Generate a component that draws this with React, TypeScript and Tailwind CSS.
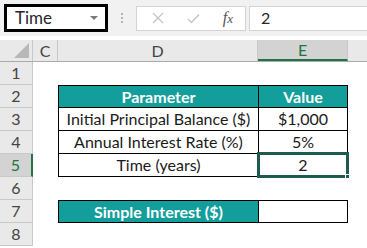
import React from 'react';

const font = { fontFamily: 'Lato, "Liberation Sans", sans-serif' };

const rows = [
  { n: 1 },
  { n: 2, d: 'Parameter', e: 'Value', head: true },
  { n: 3, d: 'Initial Principal Balance ($)', e: '$1,000' },
  { n: 4, d: 'Annual Interest Rate (%)', e: '5%' },
  { n: 5, d: 'Time (years)', e: '2', selected: true },
  { n: 6 },
  { n: 7, d: 'Simple Interest ($)', e: '', head: true },
  { n: 8 },
];

function FormulaBar() {
  return (
    <div className="flex h-[36px] items-center bg-[#f1f1f1] pl-[4px]">
      <div className="flex h-[28px] w-[104px] items-center justify-between border-[3px] border-black bg-white pl-[8px] pr-[7px]">
        <span className="text-[17px] text-[#262626]">Time</span>
        <span className="h-0 w-0 border-x-[4px] border-t-[4px] border-x-transparent border-t-[#7a7a7a]" />
      </div>
      <div className="mx-[13px] flex flex-col gap-[2px]">
        <span className="h-[2px] w-[2px] bg-[#b5b5b5]" />
        <span className="h-[2px] w-[2px] bg-[#b5b5b5]" />
        <span className="h-[2px] w-[2px] bg-[#b5b5b5]" />
      </div>
      <div className="flex h-[25px] w-[110px] items-center justify-between border border-[#d4d4d4] bg-white pl-[15px] pr-[12px]">
        <svg width="12" height="12" viewBox="0 0 12 12" stroke="#c4c4c4" strokeWidth="1.3">
          <path d="M1 1L11 11M11 1L1 11" />
        </svg>
        <svg width="13" height="11" viewBox="0 0 13 11" fill="none" stroke="#c4c4c4" strokeWidth="1.4">
          <path d="M1 6L4.5 9.5L12 1.5" />
        </svg>
        <span className="text-[16px] italic text-[#555]" style={{ fontFamily: '"Liberation Serif", serif' }}>
          f<span className="text-[13px]">x</span>
        </span>
      </div>
      <div className="ml-[3px] flex h-[25px] flex-1 items-center border border-r-0 border-[#d4d4d4] bg-white pl-[11px] text-[16px] text-[#262626]">
        2
      </div>
    </div>
  );
}

function ColumnHeaders() {
  return (
    <div className="mt-[4px] flex h-[22px] border-b border-[#ababab] bg-[#e9e9e9] text-[16px] text-[#444]">
      <div className="flex w-[33px] items-end justify-end border-r border-[#c8c8c8] pb-[3px] pr-[3px]">
        <span className="h-0 w-0" style={{ borderBottom: '15px solid #b8b8b8', borderLeft: '15px solid transparent' }} />
      </div>
      <div className="flex w-[25px] items-center justify-center border-r border-[#c8c8c8]">C</div>
      <div className="flex w-[200px] items-center justify-center border-r border-[#c8c8c8]">D</div>
      <div className="flex w-[90px] items-center justify-center border-b-2 border-r border-b-[#217346] border-r-[#c8c8c8] bg-[#d3d3d3] text-[#217346]">
        E
      </div>
      <div className="flex-1" />
    </div>
  );
}

export default function App() {
  return (
    <div className="h-[248px] w-[367px] overflow-hidden bg-white" style={font}>
      <FormulaBar />
      <ColumnHeaders />
      {rows.map((r) => (
        <div key={r.n} className="flex h-[23px]">
          <div
            className={`flex w-[33px] items-center justify-center border-b border-r text-[16px] ${
              r.selected
                ? 'border-b-[#c8c8c8] border-r-2 border-r-[#217346] bg-[#d3d3d3] text-[#217346]'
                : 'border-[#c8c8c8] bg-[#e9e9e9] text-[#444]'
            }`}
          >
            {r.n}
          </div>
          <div className="w-[25px]" />
          {r.d !== undefined ? (
            <>
              <div
                className={`flex w-[200px] items-center justify-center border-b border-l border-black text-[16px] ${
                  r.head ? 'bg-[#139e9b] font-bold text-white' : 'text-[#1a1a1a]'
                } ${r.n === 2 || r.n === 7 ? 'border-t' : ''}`}
              >
                {r.d}
              </div>
              <div
                className={`relative flex w-[90px] items-center justify-center border-b border-l border-r border-black text-[16px] ${
                  r.head && r.e ? 'bg-[#139e9b] font-bold text-white' : 'text-[#1a1a1a]'
                } ${r.n === 2 || r.n === 7 ? 'border-t' : ''}`}
              >
                {r.e}
                {r.selected && (
                  <div className="absolute -inset-x-[2px] -top-[2px] -bottom-[2px] border-[3px] border-[#1d5a4f]">
                    <span className="absolute -bottom-[4px] -right-[4px] h-[5px] w-[5px] border border-white bg-[#1d5a4f]" />
                  </div>
                )}
              </div>
            </>
          ) : null}
        </div>
      ))}
    </div>
  );
}
